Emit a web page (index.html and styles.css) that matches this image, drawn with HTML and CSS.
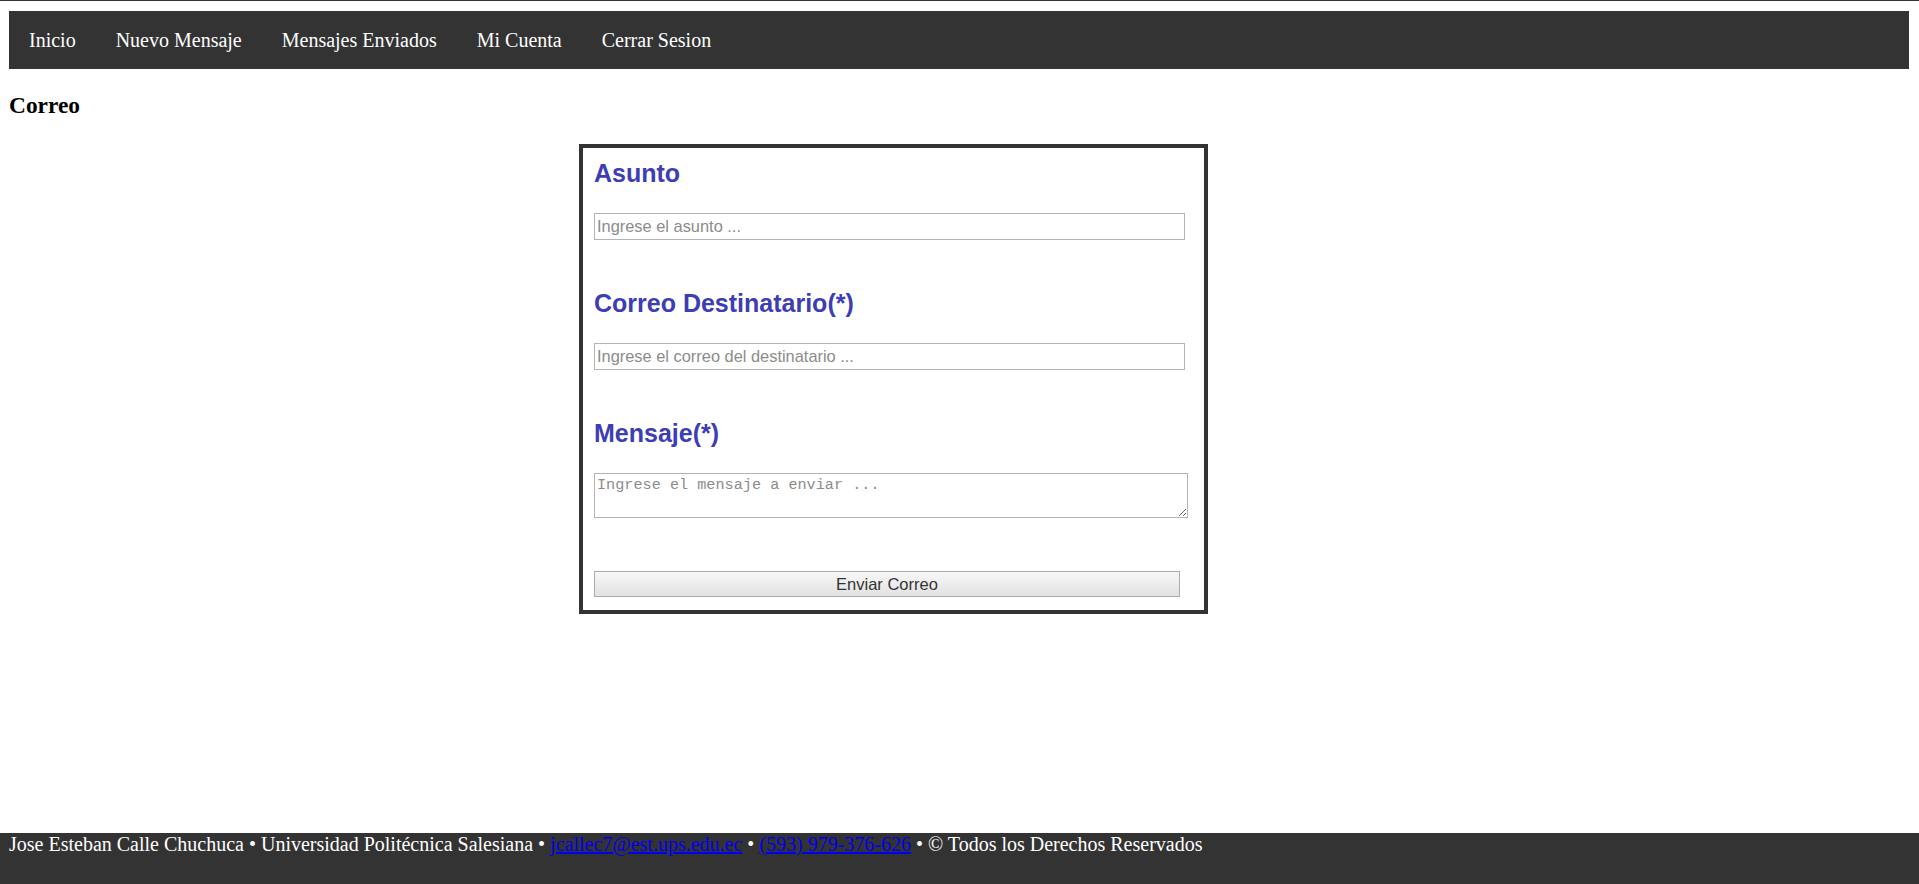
FILE: index.html
```html
<!DOCTYPE html>
<html lang="es">
<head>
<meta charset="utf-8">
<title>Correo</title>
<link rel="stylesheet" href="styles.css">
</head>
<body>
<nav class="menu">
  <a class="menu-link" href="#">Inicio</a>
  <a class="menu-link" href="#">Nuevo Mensaje</a>
  <a class="menu-link" href="#">Mensajes Enviados</a>
  <a class="menu-link" href="#">Mi Cuenta</a>
  <a class="menu-link" href="#">Cerrar Sesion</a>
</nav>
<h3 class="page-title">Correo</h3>
<form class="mail-box">
  <h2 class="field-title">Asunto</h2>
  <input class="field-input" type="text" placeholder="Ingrese el asunto ...">
  <h2 class="field-title">Correo Destinatario(*)</h2>
  <input class="field-input" type="email" placeholder="Ingrese el correo del destinatario ...">
  <h2 class="field-title">Mensaje(*)</h2>
  <textarea class="field-area" placeholder="Ingrese el mensaje a enviar ..."></textarea>
  <button class="send-btn" type="button">Enviar Correo</button>
</form>
<footer class="foot">
  Jose Esteban Calle Chuchuca • Universidad Politécnica Salesiana • <a class="foot-link" href="#">jcallec7@est.ups.edu.ec</a> • <a class="foot-link" href="#">(593) 979-376-626</a> • © Todos los Derechos Reservados
</footer>
</body>
</html>
```
FILE: styles.css
```css
html {
  border-top: 1px solid #333333;
}
body {
  margin: 10px 10px 0 9px;
  font-family: "Liberation Serif", "Times New Roman", serif;
  background: #ffffff;
}
.menu {
  display: flex;
  align-items: center;
  height: 58px;
  background: #333333;
}
.menu-link {
  padding: 0 20px;
  font-size: 20px;
  line-height: 23px;
  color: #ffffff;
  text-decoration: none;
}
.page-title {
  margin: 23px 0 25px 0;
  font-size: 23.4px;
  line-height: 27px;
  font-weight: bold;
  color: #000000;
}
.mail-box {
  display: flex;
  flex-direction: column;
  align-items: flex-start;
  width: 600px;
  margin: 0 0 0 30%;
  padding: 11px 10px 11px 11px;
  border: 4px solid #333333;
  font-family: "Liberation Sans", Arial, sans-serif;
}
.field-title {
  margin: 0 0 26px 0;
  font-size: 25px;
  line-height: 28px;
  font-weight: bold;
  color: #3d3db4;
}
.field-input {
  box-sizing: border-box;
  width: 591px;
  height: 27px;
  margin: 0 0 49px 0;
  padding: 0 2px;
  border: 1px solid #b4b4b4;
  border-radius: 0;
  font-family: "Liberation Sans", Arial, sans-serif;
  font-size: 16.4px;
  color: #222222;
  background: #ffffff;
  outline: none;
}
.field-input::placeholder {
  color: #8c8c8c;
}
.field-area {
  box-sizing: border-box;
  width: 594px;
  height: 45px;
  margin: 0 0 53px 0;
  padding: 2px;
  border: 1px solid #b4b4b4;
  border-radius: 0;
  font-family: "Liberation Mono", "Courier New", monospace;
  font-size: 15.2px;
  color: #222222;
  outline: none;
}
.field-area::placeholder {
  color: #8c8c8c;
}
.send-btn {
  box-sizing: border-box;
  width: 586px;
  height: 26px;
  margin: 0 0 2px 0;
  padding: 0;
  border: 1px solid #ababab;
  border-radius: 0;
  background: linear-gradient(#f7f7f7, #e2e2e2);
  font-family: "Liberation Sans", Arial, sans-serif;
  font-size: 16.5px;
  color: #333333;
}
.foot {
  position: fixed;
  left: 0;
  right: 0;
  bottom: 0;
  height: 51px;
  padding: 0 8px 0 9px;
  background: #333333;
  color: #ffffff;
  font-size: 20px;
  line-height: 23px;
}
.foot-link {
  color: #0000ee;
}
```
